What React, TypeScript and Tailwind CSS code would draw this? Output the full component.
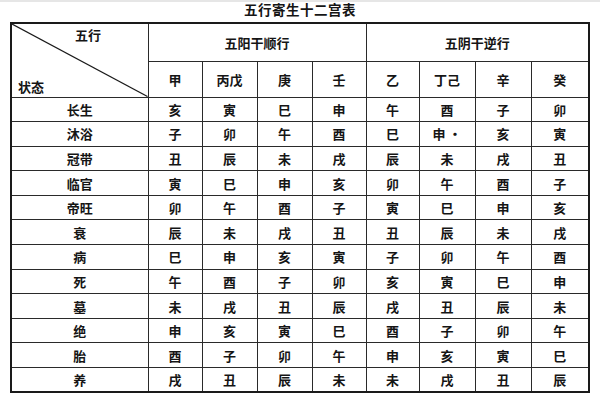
const yang = ["甲", "丙戊", "庚", "壬"]
const yin = ["乙", "丁己", "辛", "癸"]

// 十二长生 rows: state, then the branch for each stem in header order
const rows: [string, string[]][] = [
  ["长生", ["亥", "寅", "巳", "申", "午", "酉", "子", "卯"]],
  ["沐浴", ["子", "卯", "午", "酉", "巳", "申 ·", "亥", "寅"]],
  ["冠带", ["丑", "辰", "未", "戌", "辰", "未", "戌", "丑"]],
  ["临官", ["寅", "巳", "申", "亥", "卯", "午", "酉", "子"]],
  ["帝旺", ["卯", "午", "酉", "子", "寅", "巳", "申", "亥"]],
  ["衰", ["辰", "未", "戌", "丑", "丑", "辰", "未", "戌"]],
  ["病", ["巳", "申", "亥", "寅", "子", "卯", "午", "酉"]],
  ["死", ["午", "酉", "子", "卯", "亥", "寅", "巳", "申"]],
  ["墓", ["未", "戌", "丑", "辰", "戌", "丑", "辰", "未"]],
  ["绝", ["申", "亥", "寅", "巳", "酉", "子", "卯", "午"]],
  ["胎", ["酉", "子", "卯", "午", "申", "亥", "寅", "巳"]],
  ["养", ["戌", "丑", "辰", "未", "未", "戌", "丑", "辰"]],
]

const cell = "border border-[#2a2a2a] text-center align-middle p-0"

export default function App() {
  return (
    <div
      className="w-[600px] h-[400px] bg-white text-[#151515] overflow-hidden"
      style={{ fontFamily: '"Noto Sans CJK SC", "Noto Sans", sans-serif' }}
    >
      <div className="h-[2px] bg-[#e6e6e6]" />
      <div className="h-[20px] flex justify-center items-start">
        <h1 className="text-[13.5px] leading-[14px] font-bold tracking-[0.5px]">五行寄生十二宫表</h1>
      </div>

      <div className="pl-[10px]">
        <table className="w-[578px] table-fixed border-collapse border-2 border-[#1a1a1a] text-[13px] font-semibold leading-none">
          <colgroup>
            <col className="w-[137px]" />
            <col className="w-[54px]" />
            <col className="w-[55px]" />
            <col className="w-[55px]" />
            <col className="w-[54px]" />
            <col className="w-[53px]" />
            <col className="w-[56px]" />
            <col className="w-[56px]" />
            <col className="w-[58px]" />
          </colgroup>
          <thead>
            <tr className="h-[38px]">
              <th rowSpan={2} className={`${cell} relative`}>
                <svg className="absolute inset-0 w-full h-full" viewBox="0 0 100 100" preserveAspectRatio="none">
                  <line x1="0" y1="0" x2="100" y2="100" stroke="#1a1a1a" strokeWidth="1.2" vectorEffect="non-scaling-stroke" />
                </svg>
                <span className="absolute left-[63px] top-[4px] font-semibold">五行</span>
                <span className="absolute left-[6px] top-[56px] font-semibold">状态</span>
              </th>
              <th colSpan={4} className={`${cell} font-semibold`}>五阳干顺行</th>
              <th colSpan={4} className={`${cell} font-semibold`}>五阴干逆行</th>
            </tr>
            <tr className="h-[36px]">
              {[...yang, ...yin].map((s) => (
                <th key={s} className={`${cell} font-semibold`}>{s}</th>
              ))}
            </tr>
          </thead>
          <tbody>
            {rows.map(([state, vals]) => (
              <tr key={state} className="h-[24.6px]">
                <td className={cell}>{state}</td>
                {vals.map((v, i) => (
                  <td key={i} className={cell}>{v}</td>
                ))}
              </tr>
            ))}
          </tbody>
        </table>
      </div>
    </div>
  )
}
